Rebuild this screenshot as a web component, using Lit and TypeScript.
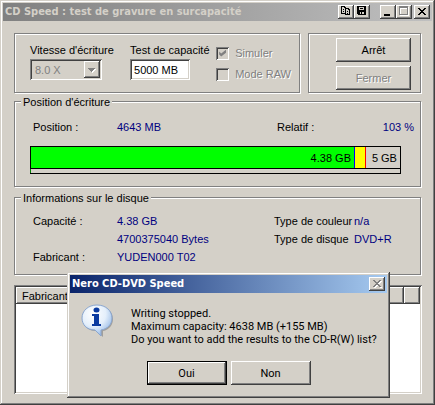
import { LitElement, html, css, svg } from "lit";
import { customElement } from "lit/decorators.js";
import { styleMap } from "lit/directives/style-map.js";

const copyIcon = svg`
  <path d="M1 0h4v1h1v1h3v1h1v6H5V8H1z M2 1v6h3V2H4V1z M6 3v5h3V4H8V3z" fill="#000" fill-rule="evenodd"/>
  <path d="M3 3h1v1H3z M3 5h1v1H3z M7 5h1v1H7z M7 7h1v1H7z" fill="#000"/>`;
const saveIcon = svg`
  <path d="M1 0h9v9H2V8H1z" fill="#000"/>
  <path d="M3 1h1v3H3z M7 1h1v3H7z M4 3h3v1H4z M2 1h0v7h0z M4 6h1v2H4z M6 6h2v2H6z" fill="#d4d0c8"/>
  <path d="M4 1h3v1H4z" fill="#d4d0c8"/>`;
const minIcon = svg`<path d="M2 8h6v2H2z" fill="#000"/>`;
const maxIcon = svg`
  <path d="M2 1h9v9H2z M3 3v6h7V3z" fill="#fff" fill-rule="evenodd"/>
  <path d="M1 0h9v9H1z M2 2v6h7V2z" fill="#808080" fill-rule="evenodd"/>`;
const closeShape =
  "M2 2h2v1h1v1h2V3h1V2h2v1H9v1H8v1H7v1h1v1h1v1h1v1H8V8H7V7H5v1H4v1H2V8h1V7h1V6h1V5H4V4H3V3H2z";
const closeIcon = svg`<path d=${closeShape} fill="#000"/>`;
const closeGrayIcon = svg`
  <path d=${closeShape} fill="#fff" transform="translate(1 1)"/>
  <path d=${closeShape} fill="#808080"/>`;

const caption = (label: string, icon: unknown, cls = "") => html`
  <button class="cap ${cls}" aria-label=${label}>
    <svg width="12" height="12" viewBox="0 0 12 12" shape-rendering="crispEdges">${icon}</svg>
  </button>`;

@customElement("app-root")
export class AppRoot extends LitElement {
  static styles = css`
    :host {
      display: block;
      font: 11px/16px "Liberation Sans", Arial, sans-serif;
      color: #000;
    }
    * { box-sizing: border-box; }
    button, input, select { font: inherit; color: inherit; margin: 0; border-radius: 0; }
    .window {
      position: relative;
      display: flex;
      flex-direction: column;
      min-height: 100vh;
      padding: 3px;
      background: #d4d0c8;
      box-shadow: inset -1px -1px #404040, inset 1px 1px #d4d0c8,
        inset -2px -2px #808080, inset 2px 2px #fff;
    }
    .bar {
      display: flex;
      align-items: center;
      height: 18px;
      padding: 0 2px;
      font: bold 11px/18px "DejaVu Sans Condensed", "DejaVu Sans", sans-serif;
      white-space: nowrap;
    }
    .bar h1, .bar h2 { flex: 1; margin: 0; font: inherit; }
    .main-bar { color: #d4d0c8; background: linear-gradient(90deg, #808080, #c0c0c0); }
    .dialog-bar { color: #fff; background: linear-gradient(90deg, #0a246a, #a6caf0); }
    .cap {
      display: grid;
      place-items: center;
      width: 16px;
      height: 14px;
      padding: 0;
      border: 0;
      background: #d4d0c8;
      box-shadow: inset -1px -1px #404040, inset 1px 1px #fff, inset -2px -2px #808080;
    }
    .gap-wide { margin-left: 10px; }
    .gap { margin-left: 2px; }
    .content { flex: 1; display: flex; flex-direction: column; padding: 12px 11px 8px; }
    .group {
      border: 1px solid #808080;
      box-shadow: 1px 1px #fff, inset 1px 1px #fff;
      min-width: 0;
      margin: 0;
    }
    .top { display: flex; gap: 8px; }
    .options { flex: 1; display: flex; height: 60px; padding: 8px 8px 0 15px; }
    .field { display: flex; flex-direction: column; gap: 1px; width: 101px; }
    .test { width: 87px; }
    .field label { white-space: nowrap; }
    .combo, .text {
      height: 21px;
      border: 0;
      box-shadow: inset 1px 1px #808080, inset -1px -1px #fff,
        inset 2px 2px #404040, inset -2px -2px #d4d0c8;
    }
    .combo { position: relative; width: 72px; }
    .combo select {
      appearance: none;
      display: block;
      width: 100%;
      height: 21px;
      padding: 0 20px 0 5px;
      border: 0;
      background: none;
      color: #808080;
      opacity: 1;
    }
    .arrow {
      position: absolute;
      top: 2px;
      right: 2px;
      width: 16px;
      height: 17px;
      pointer-events: none;
      background: #d4d0c8;
      box-shadow: inset -1px -1px #404040, inset 1px 1px #fff, inset -2px -2px #808080;
    }
    .text { width: 60px; padding: 0 4px; background: #fff; }
    .checks { display: flex; flex-direction: column; gap: 5px; padding-top: 3px; white-space: nowrap; }
    .check { display: flex; align-items: center; gap: 6px; color: #808080; text-shadow: 1px 1px #fff; }
    .check input {
      appearance: none;
      width: 13px;
      height: 13px;
      box-shadow: inset 1px 1px #808080, inset -1px -1px #fff,
        inset 2px 2px #404040, inset -2px -2px #d4d0c8;
    }
    .check input:checked::before {
      content: "";
      display: block;
      width: 7px;
      height: 7px;
      margin: 3px;
      background: #808080;
      clip-path: polygon(0 29%, 29% 57%, 100% 0, 100% 43%, 29% 100%, 0 71%);
    }
    .actions { display: flex; flex-direction: column; gap: 4px; width: 113px; padding: 4px 9px 0 27px; }
    .btn {
      height: 24px;
      padding: 0;
      border: 0;
      background: #d4d0c8;
      box-shadow: inset -1px -1px #404040, inset 1px 1px #fff, inset -2px -2px #808080;
    }
    .btn:disabled { color: #808080; text-shadow: 1px 1px #fff; }
    legend {
      height: 15px;
      margin-left: -9px;
      padding: 1px 2px 0;
      line-height: 15px;
      background: #d4d0c8;
    }
    .position { margin-top: 1px; padding: 10px 19px 12px 15px; }
    .info { margin-top: 3px; padding: 8px 0 9px 15px; }
    dl { display: grid; margin: 0; padding-left: 3px; white-space: nowrap; }
    dt, dd { margin: 0; }
    dd { color: #000080; }
    .position dl { grid-template-columns: 84px 1fr 73px 64px; margin-right: -13px; }
    .position dd:last-child { text-align: right; }
    .info dl { grid-template-columns: 84px 1fr 80px 66px; row-gap: 2px; }
    .last { grid-column: 1; }
    .meter { margin-top: 11px; border: 1px solid #000; border-left: 0; }
    .track {
      display: flex;
      height: 22px;
      line-height: 22px;
      border-left: 1px solid #000;
      border-bottom: 1px solid #000;
      text-align: right;
      white-space: nowrap;
    }
    .fill { background: #0f0; padding-right: 3px; border-right: 1px solid #00f; }
    .over { background: #ff0; border-right: 1px solid #f00; }
    .rest { padding-right: 3px; }
    .strip { height: 4px; border-left: 1px solid #008000; }
    .list {
      flex: 1;
      min-height: 109px;
      margin: 10px -1px 0 0;
      padding: 2px;
      background: #fff;
      box-shadow: inset 1px 1px #808080, inset -1px -1px #fff,
        inset 2px 2px #404040, inset -2px -2px #d4d0c8;
    }
    table { width: 100%; border-collapse: collapse; table-layout: fixed; }
    th {
      height: 17px;
      padding: 0 6px;
      font-weight: normal;
      line-height: 16px;
      text-align: left;
      background: #d4d0c8;
      box-shadow: inset -1px -1px #404040, inset 1px 1px #fff, inset -2px -2px #808080;
    }
    .c-end { width: 16px; }
    .dialog {
      position: absolute;
      top: 272px;
      left: 67px;
      right: 45px;
      padding: 3px;
      background: #d4d0c8;
      box-shadow: inset -1px -1px #404040, inset 1px 1px #d4d0c8,
        inset -2px -2px #808080, inset 2px 2px #fff;
      font: 11px/13px Roboto, sans-serif;
    }
    .message { display: flex; gap: 17px; padding: 11px 7px 0 11px; white-space: nowrap; }
    .message p { margin: 3px 0 0; }
    .message svg { flex: none; }
    .buttons { display: flex; justify-content: center; gap: 4px; padding: 15px 0 10px; }
    .buttons .btn { width: 80px; }
    .buttons .default { border: 1px solid #000; }
  `;

  private segments = [
    { cls: "fill", share: 87.8, text: "4.38 GB" },
    { cls: "over", share: 3, text: "" },
    { cls: "rest", share: 9.2, text: "5 GB" },
  ];

  render() {
    return html`
      <main class="window">
        <header class="bar main-bar">
          <h1>CD Speed : test de gravure en surcapacité</h1>
          ${caption("Copier", copyIcon)} ${caption("Enregistrer", saveIcon)}
          ${caption("Réduire", minIcon, "gap-wide")} ${caption("Agrandir", maxIcon)}
          ${caption("Quitter", closeIcon, "gap")}
        </header>
        <div class="content">
          <div class="top">
            <section class="group options">
              <div class="field">
                <label for="speed">Vitesse d'écriture</label>
                <div class="combo">
                  <select id="speed" disabled><option>8.0 X</option></select>
                  <svg class="arrow" viewBox="0 0 16 17" shape-rendering="crispEdges">
                    <path d="M5 8h7v1h-1v1h-1v1H9v1H8v-1H7v-1H6V9H5z" fill="#fff"/>
                    <path d="M4 7h7v1h-1v1H9v1H8v1H7v-1H6V9H5V8H4z" fill="#808080"/>
                  </svg>
                </div>
              </div>
              <div class="field test">
                <label for="capacity">Test de capacité</label>
                <input class="text" id="capacity" value="5000 MB" />
              </div>
              <div class="checks">
                <label class="check"><input type="checkbox" checked disabled />Simuler</label>
                <label class="check"><input type="checkbox" disabled />Mode RAW</label>
              </div>
            </section>
            <section class="group actions">
              <button class="btn">Arrêt</button>
              <button class="btn" disabled>Fermer</button>
            </section>
          </div>
          <fieldset class="group position">
            <legend>Position d'écriture</legend>
            <dl>
              <dt>Position :</dt><dd>4643 MB</dd>
              <dt>Relatif :</dt><dd>103 %</dd>
            </dl>
            <div class="meter">
              <div class="track">
                ${this.segments.map((s) => html`
                  <div class=${s.cls} style=${styleMap({ width: `${s.share}%` })}>${s.text}</div>`)}
              </div>
              <div class="strip"></div>
            </div>
          </fieldset>
          <fieldset class="group info">
            <legend>Informations sur le disque</legend>
            <dl>
              <dt>Capacité :</dt><dd>4.38 GB</dd>
              <dt>Type de couleur</dt><dd>n/a</dd>
              <dt></dt><dd>4700375040 Bytes</dd>
              <dt>Type de disque</dt><dd>DVD+R</dd>
              <dt class="last">Fabricant :</dt><dd>YUDEN000 T02</dd>
            </dl>
          </fieldset>
          <div class="list">
            <table>
              <thead><tr><th>Fabricant</th><th class="c-end"></th></tr></thead>
            </table>
          </div>
        </div>
        <section class="dialog" role="dialog" aria-labelledby="dlg">
          <header class="bar dialog-bar">
            <h2 id="dlg">Nero CD-DVD Speed</h2>
            ${caption("Fermer", closeGrayIcon)}
          </header>
          <div class="message">
            <svg width="33" height="34" viewBox="0 0 33 34" aria-hidden="true">
              <defs>
                <radialGradient id="bubble" cx="38%" cy="28%" r="75%">
                  <stop offset="0" stop-color="#fff"/>
                  <stop offset=".55" stop-color="#e4effb"/>
                  <stop offset="1" stop-color="#94b8e6"/>
                </radialGradient>
              </defs>
              <path d="M17 2C26 2 32 8 32 15c0 6-4 11-10 12v6l-7-6C6 27 2 21 2 15 2 8 8 2 17 2z" fill="#777" opacity=".55"/>
              <path d="M16 1C25 1 31 7 31 14c0 6-4 11-11 12v6l-6-6C5 26 1 20 1 14 1 7 7 1 16 1z" fill="url(#bubble)" stroke="#8aa6cf"/>
              <ellipse cx="15.500" cy="6" rx="3" ry="2.500" fill="#0a3aa0"/>
              <path d="M11 10h7v10h2v2h-9v-2h2v-8h-2z" fill="#0a3aa0"/>
            </svg>
            <p>
              Writing stopped.<br />Maximum capacity: 4638 MB (+155 MB)<br />Do you want to add
              the results to the CD-R(W) list?
            </p>
          </div>
          <div class="buttons">
            <button class="btn default">Oui</button>
            <button class="btn">Non</button>
          </div>
        </section>
      </main>
    `;
  }
}
